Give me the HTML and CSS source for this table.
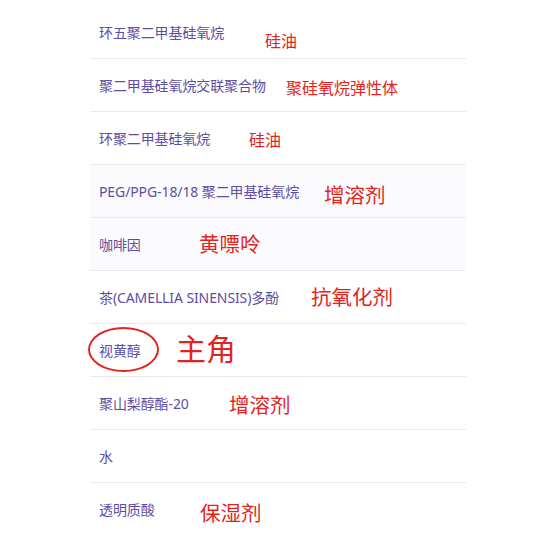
FILE: index.html
```html
<!DOCTYPE html>
<html lang="zh-CN">
<head>
<meta charset="utf-8">
<title>成分列表</title>
<link rel="stylesheet" href="styles.css">
</head>
<body>
<ul class="list">
  <li class="row"><span class="name">环五聚二甲基硅氧烷</span><span class="note n1">硅油</span></li>
  <li class="row"><span class="name">聚二甲基硅氧烷交联聚合物</span><span class="note n2">聚硅氧烷弹性体</span></li>
  <li class="row"><span class="name">环聚二甲基硅氧烷</span><span class="note n3">硅油</span></li>
  <li class="row tint"><span class="name">PEG/PPG-18/18 聚二甲基硅氧烷</span><span class="note big n4">增溶剂</span></li>
  <li class="row tint"><span class="name">咖啡因</span><span class="note big n5">黄嘌呤</span></li>
  <li class="row"><span class="name">茶(CAMELLIA SINENSIS)多酚</span><span class="note big n6">抗氧化剂</span></li>
  <li class="row"><span class="ring"></span><span class="name">视黄醇</span><span class="note huge n7">主角</span></li>
  <li class="row"><span class="name">聚山梨醇酯-20</span><span class="note big n8">增溶剂</span></li>
  <li class="row"><span class="name">水</span></li>
  <li class="row last"><span class="name">透明质酸</span><span class="note big n10">保湿剂</span></li>
</ul>
</body>
</html>
```

FILE: styles.css
```css
html, body {
  margin: 0;
  padding: 0;
  background: #ffffff;
}

body {
  font-family: "Noto Sans", "Noto Sans CJK SC", sans-serif;
}

.list {
  list-style: none;
  margin: 6px 0 0 90px;
  padding: 0;
  width: 376px;
}

.row {
  position: relative;
  height: 52px;
  border-bottom: 1px solid #ebebee;
  display: flex;
  align-items: center;
  padding-left: 9px;
  box-sizing: content-box;
}

.row.last {
  border-bottom: none;
}

.row.tint {
  background: #fbfbfd;
}

.name {
  font-size: 14px;
  color: #5d4e9f;
  line-height: 20px;
  letter-spacing: -0.1px;
  position: relative;
  top: 1px;
}

.note {
  position: absolute;
  color: #e3231d;
  font-family: "Noto Sans CJK SC", sans-serif;
  font-size: 16px;
  line-height: 1;
  white-space: nowrap;
}

.note.big {
  font-size: 20.5px;
}

.note.huge {
  font-size: 30px;
}

.n1 { left: 175px; top: 26px; }
.n2 { left: 196px; top: 20px; }
.n3 { left: 159px; top: 19px; }
.n4 { left: 234px; top: 19px; }
.n5 { left: 109px; top: 15px; }
.n6 { left: 221px; top: 15px; }
.n7 { left: 86px; top: 8px; }
.n8 { left: 139px; top: 17px; }
.n10 { left: 110px; top: 19px; }

.ring {
  position: absolute;
  left: -2px;
  top: 3px;
  width: 67px;
  height: 41px;
  border: 2.5px solid #e3231d;
  border-radius: 50%;
}
```
